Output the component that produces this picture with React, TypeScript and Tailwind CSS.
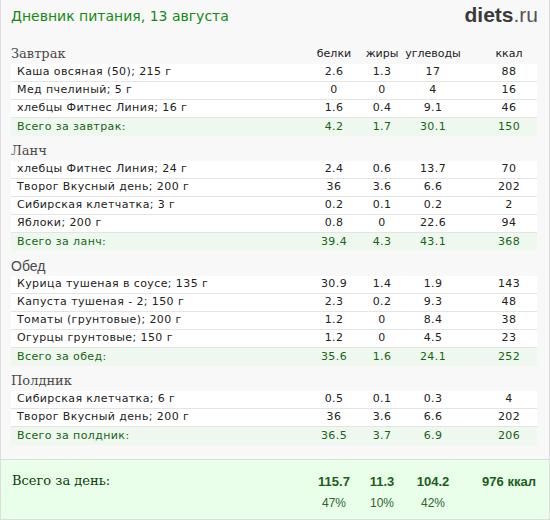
const meals = [
  {
    title: 'Завтрак',
    serif: true,
    items: [
      ['Каша овсяная (50); 215 г', '2.6', '1.3', '17', '88'],
      ['Мед пчелиный; 5 г', '0', '0', '4', '16'],
      ['хлебцы Фитнес Линия; 16 г', '1.6', '0.4', '9.1', '46'],
    ],
    total: ['Всего за завтрак:', '4.2', '1.7', '30.1', '150'],
  },
  {
    title: 'Ланч',
    serif: true,
    items: [
      ['хлебцы Фитнес Линия; 24 г', '2.4', '0.6', '13.7', '70'],
      ['Творог Вкусный день; 200 г', '36', '3.6', '6.6', '202'],
      ['Сибирская клетчатка; 3 г', '0.2', '0.1', '0.2', '2'],
      ['Яблоки; 200 г', '0.8', '0', '22.6', '94'],
    ],
    total: ['Всего за ланч:', '39.4', '4.3', '43.1', '368'],
  },
  {
    title: 'Обед',
    serif: false,
    items: [
      ['Курица тушеная в соусе; 135 г', '30.9', '1.4', '1.9', '143'],
      ['Капуста тушеная - 2; 150 г', '2.3', '0.2', '9.3', '48'],
      ['Томаты (грунтовые); 200 г', '1.2', '0', '8.4', '38'],
      ['Огурцы грунтовые; 150 г', '1.2', '0', '4.5', '23'],
    ],
    total: ['Всего за обед:', '35.6', '1.6', '24.1', '252'],
  },
  {
    title: 'Полдник',
    serif: true,
    items: [
      ['Сибирская клетчатка; 6 г', '0.5', '0.1', '0.3', '4'],
      ['Творог Вкусный день; 200 г', '36', '3.6', '6.6', '202'],
    ],
    total: ['Всего за полдник:', '36.5', '3.7', '6.9', '206'],
  },
];

const grid = 'grid grid-cols-[1fr_50px_46px_56px_76px] items-center';

function Row({ cells, total }: { cells: string[]; total?: boolean }) {
  return (
    <div
      className={`${grid} h-[18px] border-b border-[#e4e4e4] text-[11px] tracking-[0.4px] ${
        total ? 'bg-[#eff8ef] text-[#156515] border-b-0' : 'bg-white text-[#222]'
      }`}
    >
      <div className="pl-[6px] truncate">{cells[0]}</div>
      <div className="text-center">{cells[1]}</div>
      <div className="text-center">{cells[2]}</div>
      <div className="text-center">{cells[3]}</div>
      <div className="text-center pl-[20px]">{cells[4]}</div>
    </div>
  );
}

export default function App() {
  return (
    <div className="w-[550px] h-[520px] bg-[#f8f8f8] border-x border-b border-[#dedede] font-['DejaVu_Sans',Verdana,sans-serif] flex flex-col">
      {/* шапка */}
      <div className="flex items-start justify-between h-[44px] px-[10px] pt-[6px]">
        <h1 className="text-[14px] text-[#138a13]">Дневник питания, 13 августа</h1>
        <div className="font-['Liberation_Sans',Arial,sans-serif] text-[21px] leading-[22px] -mt-[2px] mr-[1px]">
          <span className="font-bold text-[#3a3a3a]">diets</span>
          <span className="text-[#555]">.ru</span>
        </div>
      </div>

      <div className="px-[10px] pr-[12px]">
        {meals.map((meal, i) => (
          <div key={meal.title}>
            <div className={`${grid} ${i === 0 ? 'h-[20px]' : 'h-[25px] pt-[5px]'}`}>
              <div
                className={`text-[13px] text-[#4a4a4a] leading-[18px] ${
                  meal.serif ? "font-['DejaVu_Serif',Georgia,serif]" : "font-['Liberation_Sans',Arial,sans-serif] text-[14px]"
                }`}
              >
                {meal.title}
              </div>
              {i === 0 && (
                <>
                  <div className="text-center text-[11px] text-[#222]">белки</div>
                  <div className="text-center text-[11px] text-[#222]">жиры</div>
                  <div className="text-center text-[11px] text-[#222]">углеводы</div>
                  <div className="text-center text-[11px] text-[#222] pl-[20px]">ккал</div>
                </>
              )}
            </div>
            {meal.items.map((it, j) => (
              <Row key={j} cells={it} />
            ))}
            <Row cells={meal.total} total />
          </div>
        ))}
      </div>

      {/* итог за день */}
      <div className="mt-auto h-[60px] bg-[#eaffea] border-t border-[#dcdcdc] px-[10px] pr-[12px] pt-[10px]">
        <div className={`${grid}`}>
          <div className="font-['DejaVu_Serif',Georgia,serif] text-[13px] text-[#0b3d0b] pl-[1px]">Всего за день:</div>
          <div className="text-center font-['Liberation_Sans',Arial,sans-serif] font-bold text-[13px] text-[#1b5e1b] pt-[2px]">115.7</div>
          <div className="text-center font-['Liberation_Sans',Arial,sans-serif] font-bold text-[13px] text-[#1b5e1b] pt-[2px]">11.3</div>
          <div className="text-center font-['Liberation_Sans',Arial,sans-serif] font-bold text-[13px] text-[#1b5e1b] pt-[2px]">104.2</div>
          <div className="text-center font-['Liberation_Sans',Arial,sans-serif] font-bold text-[13px] text-[#1b5e1b] pt-[2px] pl-[20px] whitespace-nowrap">976 ккал</div>
        </div>
        <div className={`${grid} mt-[2px] font-['Liberation_Sans',Arial,sans-serif] text-[12px] text-[#2f642f]`}>
          <div />
          <div className="text-center">47%</div>
          <div className="text-center">10%</div>
          <div className="text-center">42%</div>
          <div />
        </div>
      </div>
    </div>
  );
}
